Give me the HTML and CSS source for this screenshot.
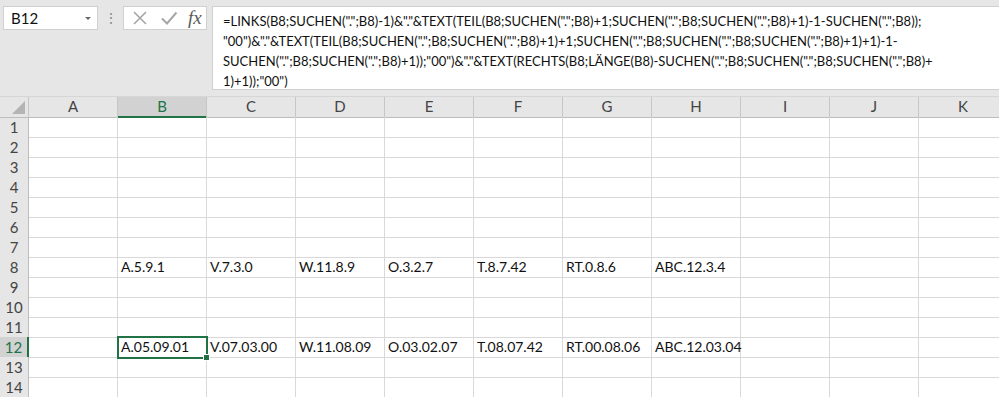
FILE: index.html
```html
<!DOCTYPE html>
<html lang="de">
  <head>
    <meta charset="UTF-8" />
    <title>Mappe1 - Excel</title>
    <link rel="stylesheet" href="styles.css">
  </head>
  <body>
    <header class="toolbar">
      <div class="namebox">
        <span>B12</span>
        <span class="arrow"></span>
      </div>
      <div class="dots">⋮</div>
      <div class="fxbox">
        <svg class="ico" width="16" height="16" viewBox="0 0 16 16">
          <path d="M2 2 L14 14 M14 2 L2 14" stroke="#a6a6a6" stroke-width="1.6" fill="none" />
        </svg>
        <svg class="ico" width="18" height="16" viewBox="0 0 18 16">
          <path d="M2 8.5 L7 13.5 L16.5 2.5" stroke="#a6a6a6" stroke-width="2" fill="none" />
        </svg>
        <span class="fx">fx</span>
      </div>
      <div class="formula">=LINKS(B8;SUCHEN(".";B8)-1)&amp;"."&amp;TEXT(TEIL(B8;SUCHEN(".";B8)+1;SUCHEN(".";B8;SUCHEN(".";B8)+1)-1-SUCHEN(".";B8));<br>"00")&amp;"."&amp;TEXT(TEIL(B8;SUCHEN(".";B8;SUCHEN(".";B8)+1)+1;SUCHEN(".";B8;SUCHEN(".";B8;SUCHEN(".";B8)+1)+1)-1-<br>SUCHEN(".";B8;SUCHEN(".";B8)+1));"00")&amp;"."&amp;TEXT(RECHTS(B8;LÄNGE(B8)-SUCHEN(".";B8;SUCHEN(".";B8;SUCHEN(".";B8)+<br>1)+1));"00")</div>
    </header>

    <main class="sheet">
      <div class="row head">
        <div class="corner"></div>
        <div class="col">A</div><div class="col active">B</div><div class="col">C</div><div class="col">D</div><div class="col">E</div><div class="col">F</div><div class="col">G</div><div class="col">H</div><div class="col">I</div><div class="col">J</div><div class="col">K</div>
      </div>
      <div class="row"><div class="num">1</div><div></div><div></div><div></div><div></div><div></div><div></div><div></div><div></div><div></div><div></div><div></div></div>
      <div class="row"><div class="num">2</div><div></div><div></div><div></div><div></div><div></div><div></div><div></div><div></div><div></div><div></div><div></div></div>
      <div class="row"><div class="num">3</div><div></div><div></div><div></div><div></div><div></div><div></div><div></div><div></div><div></div><div></div><div></div></div>
      <div class="row"><div class="num">4</div><div></div><div></div><div></div><div></div><div></div><div></div><div></div><div></div><div></div><div></div><div></div></div>
      <div class="row"><div class="num">5</div><div></div><div></div><div></div><div></div><div></div><div></div><div></div><div></div><div></div><div></div><div></div></div>
      <div class="row"><div class="num">6</div><div></div><div></div><div></div><div></div><div></div><div></div><div></div><div></div><div></div><div></div><div></div></div>
      <div class="row"><div class="num">7</div><div></div><div></div><div></div><div></div><div></div><div></div><div></div><div></div><div></div><div></div><div></div></div>
      <div class="row"><div class="num">8</div><div></div><div>A.5.9.1</div><div>V.7.3.0</div><div>W.11.8.9</div><div>O.3.2.7</div><div>T.8.7.42</div><div>RT.0.8.6</div><div>ABC.12.3.4</div><div></div><div></div><div></div></div>
      <div class="row"><div class="num">9</div><div></div><div></div><div></div><div></div><div></div><div></div><div></div><div></div><div></div><div></div><div></div></div>
      <div class="row"><div class="num">10</div><div></div><div></div><div></div><div></div><div></div><div></div><div></div><div></div><div></div><div></div><div></div></div>
      <div class="row"><div class="num">11</div><div></div><div></div><div></div><div></div><div></div><div></div><div></div><div></div><div></div><div></div><div></div></div>
      <div class="row"><div class="num active">12</div><div></div><div class="sel">A.05.09.01</div><div>V.07.03.00</div><div>W.11.08.09</div><div>O.03.02.07</div><div>T.08.07.42</div><div>RT.00.08.06</div><div>ABC.12.03.04</div><div></div><div></div><div></div></div>
      <div class="row"><div class="num">13</div><div></div><div></div><div></div><div></div><div></div><div></div><div></div><div></div><div></div><div></div><div></div></div>
      <div class="row"><div class="num">14</div><div></div><div></div><div></div><div></div><div></div><div></div><div></div><div></div><div></div><div></div><div></div></div>
    </main>
  </body>
</html>
```

FILE: styles.css
```css
* {
  margin: 0px;
  padding: 0px;
  box-sizing: border-box;
}

body {
  width: 999px;
  height: 397px;
  overflow: hidden;
  background-color: #ffffff;
  font-family: Lato, "Open Sans", sans-serif;
  font-size: 14px;
  color: #111111;
}

/* Formelleiste oben */
.toolbar {
  display: flex;
  align-items: flex-start;
  height: 97px;
  padding: 6px 0 0 3px;
  background-color: #e6e6e6;
  border-bottom: 1px solid #d6d6d6;
}

.namebox {
  display: flex;
  align-items: center;
  justify-content: space-between;
  width: 95px;
  height: 24px;
  padding: 0 6px 0 7px;
  background-color: #ffffff;
  border: 1px solid #d0d0d0;
  font-size: 15px;
}

.arrow {
  width: 0;
  height: 0;
  border-left: 3px solid transparent;
  border-right: 3px solid transparent;
  border-top: 3px solid #6a6a6a;
}

.dots {
  width: 25px;
  line-height: 24px;
  text-align: center;
  color: #8a8a8a;
  font-size: 14px;
}

.fxbox {
  display: flex;
  align-items: center;
  gap: 12px;
  width: 84px;
  height: 24px;
  padding-left: 8px;
  background-color: #ffffff;
  border: 1px solid #d0d0d0;
}

.fx {
  font-family: "Liberation Serif", serif;
  font-style: italic;
  font-size: 19px;
  color: #5a5a5a;
  margin-left: -2px;
}

.formula {
  flex: 1;
  height: 84px;
  margin-left: 5px;
  padding: 4px 0 0 10px;
  background-color: #ffffff;
  border: 1px solid #d0d0d0;
  border-right: none;
  font-size: 13px;
  line-height: 20px;
  white-space: nowrap;
  overflow: hidden;
}

/* Tabelle */
.row {
  display: grid;
  grid-template-columns: 29px repeat(11, 89px);
  height: 20px;
}

.row div {
  border-right: 1px solid #d9d9d9;
  border-bottom: 1px solid #d9d9d9;
  padding-left: 3px;
  line-height: 20px;
  white-space: nowrap;
}

.head div {
  background-color: #e6e6e6;
  border-right: 1px solid #c6c6c6;
  border-bottom: 1px solid #bdbdbd;
  text-align: center;
  padding: 0;
  color: #444444;
  line-height: 19px;
  font-size: 15px;
}

.corner {
  position: relative;
}

.corner::after {
  content: "";
  position: absolute;
  right: 3px;
  bottom: 3px;
  width: 0;
  height: 0;
  border-left: 13px solid transparent;
  border-bottom: 13px solid #b4b4b4;
}

.row .num {
  background-color: #e6e6e6;
  border-right: 1px solid #bdbdbd;
  border-bottom: 1px solid #d0d0d0;
  color: #444444;
  text-align: center;
  padding: 0;
  font-size: 15px;
}

.row .active {
  background-color: #d2d2d2;
  color: #217346;
}

.head .active {
  border-bottom: 2px solid #217346;
}

.row .num.active {
  border-right: 2px solid #217346;
}

/* markierte Zelle B12 */
.row .sel {
  position: relative;
  z-index: 2;
  outline: 2px solid #217346;
  outline-offset: -1px;
}

.sel::after {
  content: "";
  position: absolute;
  right: -4px;
  bottom: -4px;
  width: 5px;
  height: 5px;
  background-color: #217346;
  border: 1px solid #ffffff;
}
```
